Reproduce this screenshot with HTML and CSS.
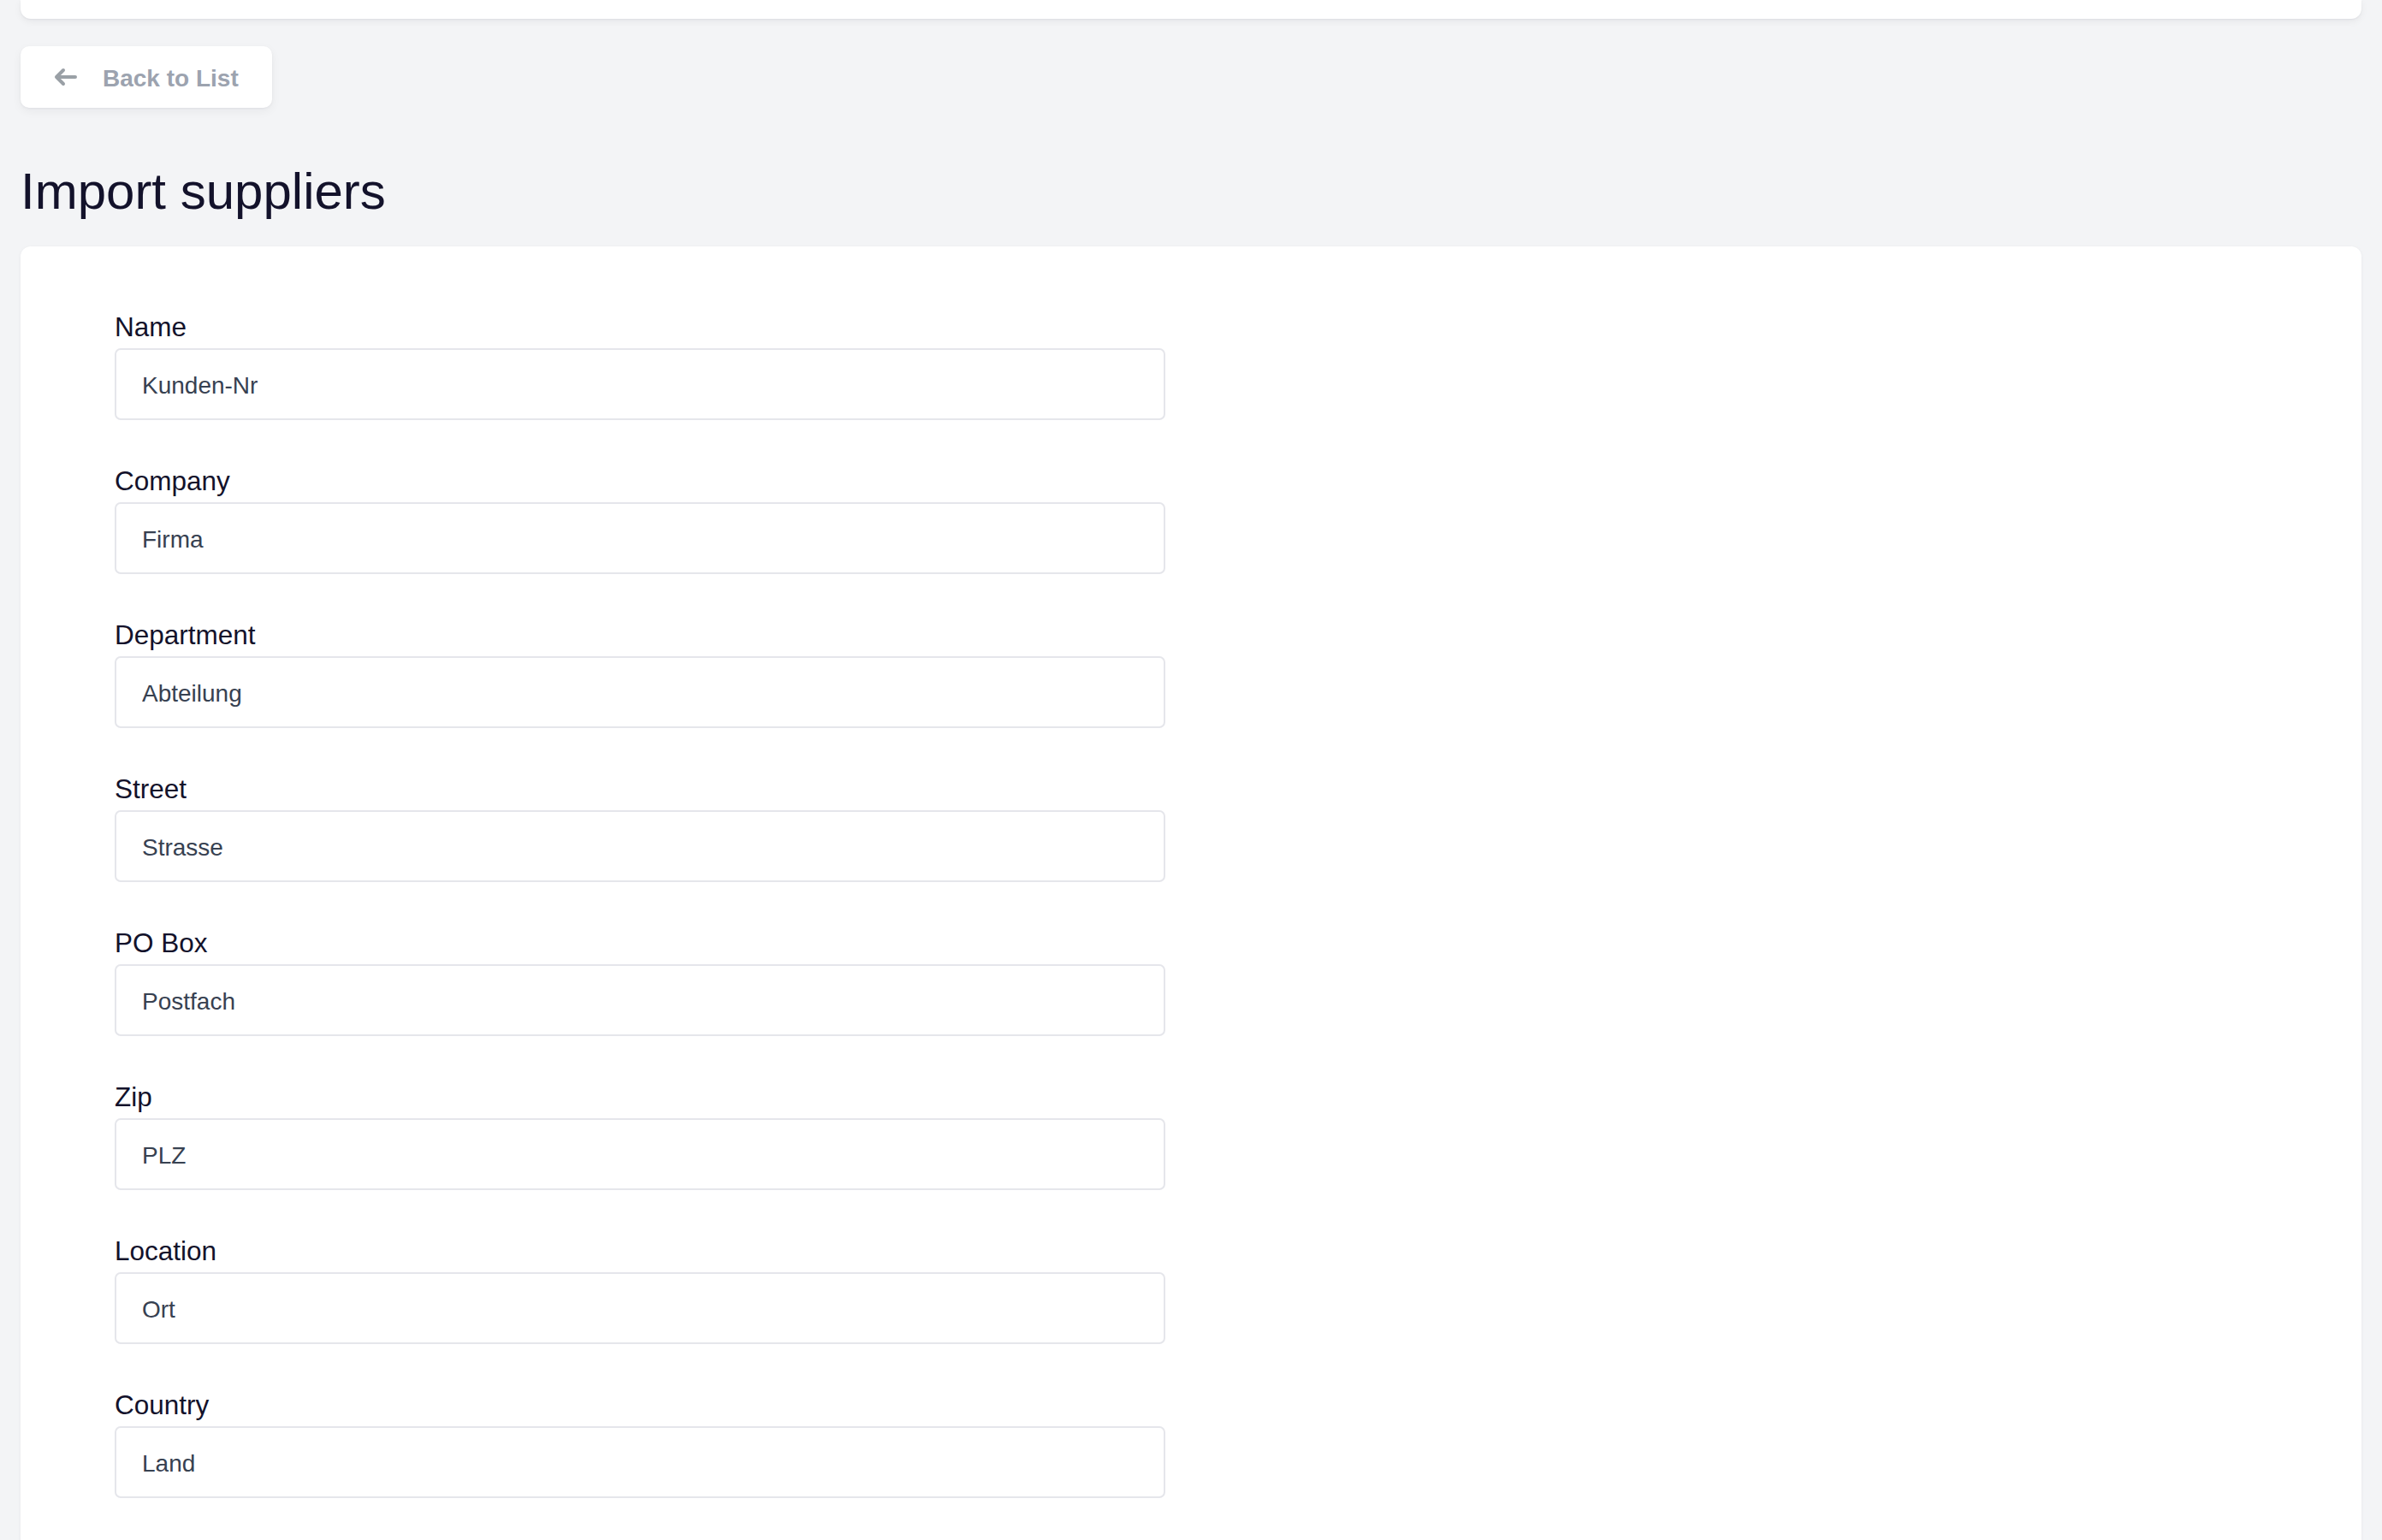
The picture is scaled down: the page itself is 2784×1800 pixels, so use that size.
FILE: index.html
```html
<!DOCTYPE html>
<html lang="en">
<head>
<meta charset="utf-8">
<title>Import suppliers</title>
<link rel="stylesheet" href="styles.css">
</head>
<body>
<div class="page">
  <div class="topbar"></div>
  <div class="toolbar">
    <a class="back-btn" href="#">
      <svg class="back-icon" viewBox="0 0 28 24" width="28" height="24" fill="none" stroke="currentColor" stroke-width="4" stroke-linecap="round" stroke-linejoin="round"><path d="M11 4L3 12l8 8M3 12h22"/></svg>
      <span class="back-text">Back to List</span>
    </a>
  </div>
  <h1 class="title">Import suppliers</h1>
  <div class="card">
    <form class="form">
      <div class="field"><label class="label">Name</label><input class="input" type="text" value="Kunden-Nr"></div>
      <div class="field"><label class="label">Company</label><input class="input" type="text" value="Firma"></div>
      <div class="field"><label class="label">Department</label><input class="input" type="text" value="Abteilung"></div>
      <div class="field"><label class="label">Street</label><input class="input" type="text" value="Strasse"></div>
      <div class="field"><label class="label">PO Box</label><input class="input" type="text" value="Postfach"></div>
      <div class="field"><label class="label">Zip</label><input class="input" type="text" value="PLZ"></div>
      <div class="field"><label class="label">Location</label><input class="input" type="text" value="Ort"></div>
      <div class="field"><label class="label">Country</label><input class="input" type="text" value="Land"></div>
    </form>
  </div>
</div>
</body>
</html>
```

FILE: styles.css
```css
html, body {
  margin: 0;
  padding: 0;
  background: #f3f4f6;
  font-family: "Liberation Sans", Arial, sans-serif;
  color: #111827;
}

.page {
  padding: 0 24px;
  height: 1800px;
  overflow: hidden;
}

.topbar {
  height: 22px;
  background: #ffffff;
  border-radius: 0 0 12px 12px;
  box-shadow: 0 3px 8px rgba(17, 24, 39, 0.06), 0 1px 2px rgba(17, 24, 39, 0.05);
}

.toolbar {
  display: flex;
  margin-top: 32px;
}

.back-btn {
  display: flex;
  align-items: center;
  gap: 29px;
  height: 72px;
  box-sizing: border-box;
  padding: 0 39px 0 39px;
  background: #ffffff;
  border-radius: 10px;
  box-shadow: 0 4px 12px rgba(17, 24, 39, 0.05), 0 1px 3px rgba(17, 24, 39, 0.05);
  color: #9ca3af;
  text-decoration: none;
  font-weight: bold;
  font-size: 28px;
  line-height: 32px;
}

.back-text {
  padding-top: 3px;
}

.back-icon {
  display: block;
  color: #9aa0a6;
}

.title {
  margin: 63px 0 30px;
  font-size: 60px;
  line-height: 69px;
  font-weight: normal;
  color: #13122b;
}

.card {
  background: #ffffff;
  border-radius: 12px;
  box-shadow: 0 1px 4px rgba(17, 24, 39, 0.05);
  padding: 72px 110px;
  min-height: 1600px;
}

.form {
  display: flex;
  flex-direction: column;
  gap: 49px;
  width: 1228px;
}

.field {
  display: flex;
  flex-direction: column;
  gap: 3px;
}

.label {
  font-size: 31.5px;
  line-height: 44px;
  color: #13122b;
}

.input {
  box-sizing: border-box;
  width: 100%;
  height: 84px;
  margin: 0;
  padding: 4px 30px 0;
  border: 2px solid #e5e6eb;
  border-radius: 7px;
  background: #ffffff;
  font-family: "Liberation Sans", Arial, sans-serif;
  font-size: 28px;
  color: #374151;
  outline: none;
}
```
